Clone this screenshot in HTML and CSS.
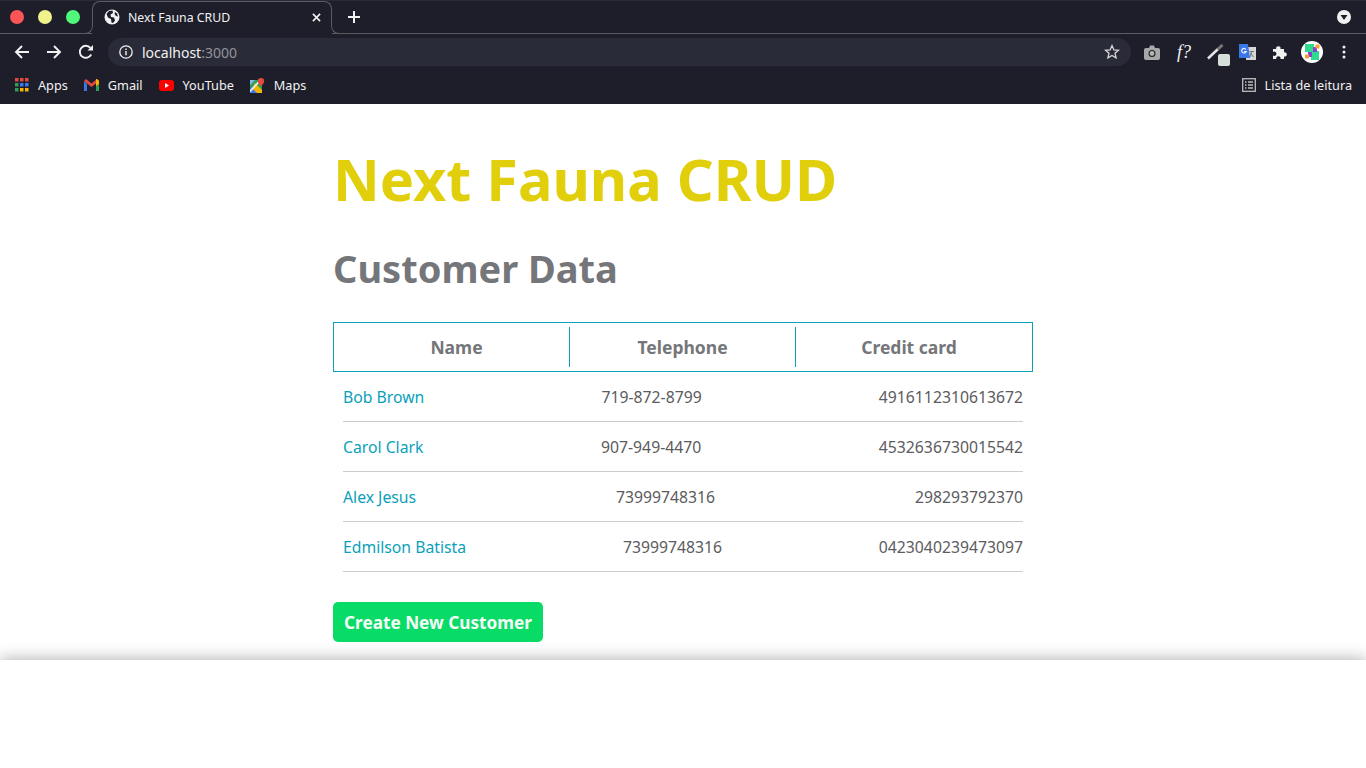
FILE: index.html
```html
<!DOCTYPE html>
<html lang="en">

<head>
    <meta charset="UTF-8">
    <title>Next Fauna CRUD</title>
    <link rel="stylesheet" href="styles.css">
</head>

<body>
    <div class="browser">
        <div class="tabstrip">
            <div class="lights">
                <span class="light red"></span>
                <span class="light yellow"></span>
                <span class="light green"></span>
            </div>
            <div class="tab">
                <span class="flare flare-left"></span>
                <span class="flare flare-right"></span>
                <svg class="ic-globe" width="16" height="16" viewBox="0 0 16 16">
                    <circle cx="8" cy="8" r="7.5" fill="#f1f1f1" />
                    <path d="M2.500 5l2.500-3 3.500-.5.5 2.500-2.500 1.500 .5 2.500 3 .5 1 3-2 2.500-1.500-.5-.5-3.500-3-1.500z" fill="#1d1e2a" />
                    <path d="M11 3l2 1.500 1 3-2-.5-1.500-2z" fill="#1d1e2a" />
                </svg>
                <span class="tab-title">Next Fauna CRUD</span>
                <svg class="ic-close" width="9" height="9" viewBox="0 0 10 10">
                    <path d="M1 1l8 8M9 1l-8 8" stroke="#f1f1f1" stroke-width="1.800" />
                </svg>
            </div>
            <svg class="ic-plus" width="12" height="12" viewBox="0 0 12 12">
                <path d="M6 0v12M0 6h12" stroke="#f1f1f1" stroke-width="2" />
            </svg>
            <div class="strip-end">
                <svg width="14" height="14" viewBox="0 0 14 14">
                    <circle cx="7" cy="7" r="7" fill="#f1f1f1" />
                    <path d="M3.500 5h7L7 10z" fill="#1d1e2a" />
                </svg>
            </div>
        </div>

        <div class="toolbar">
            <svg class="nav-ic" width="16" height="16" viewBox="0 0 16 16">
                <path d="M15 8H2M8 2L2 8l6 6" fill="none" stroke="#f1f1f1" stroke-width="1.900" />
            </svg>
            <svg class="nav-ic" width="16" height="16" viewBox="0 0 16 16">
                <path d="M1 8h13M8 2l6 6-6 6" fill="none" stroke="#f1f1f1" stroke-width="1.900" />
            </svg>
            <svg class="nav-ic" width="16" height="16" viewBox="0 0 16 16">
                <path d="M13.200 10.500A6 6 0 1 1 12.400 3.900" fill="none" stroke="#f1f1f1" stroke-width="1.900" />
                <path d="M9.500 6.500H15V1z" fill="#f1f1f1" />
            </svg>
            <div class="omnibox">
                <svg width="14" height="14" viewBox="0 0 14 14">
                    <circle cx="7" cy="7" r="6.200" fill="none" stroke="#f1f1f1" stroke-width="1.300" />
                    <path d="M7 6v4.200M7 3.600v1.400" stroke="#f1f1f1" stroke-width="1.400" />
                </svg>
                <span class="url">localhost<span class="port">:3000</span></span>
                <svg class="ic-star" width="16" height="16" viewBox="0 0 16 16">
                    <path d="M8 1.600l1.900 4.300 4.600.4-3.500 3 1.100 4.600L8 11.400l-4.100 2.500L5 9.300l-3.500-3 4.600-.4z" fill="none" stroke="#d8d8d8" stroke-width="1.300" />
                </svg>
            </div>
            <div class="extensions">
                <div class="ext-slot">
                    <svg width="16" height="15" viewBox="0 0 16 15">
                        <path d="M2 3h3l1-2.500h4L11 3h3a2 2 0 0 1 2 2v8a2 2 0 0 1-2 2H2a2 2 0 0 1-2-2V5a2 2 0 0 1 2-2z" fill="#a8a8a8" />
                        <circle cx="8" cy="8.500" r="3.500" fill="#1d1e2a" />
                        <circle cx="8" cy="8.500" r="2.400" fill="#b4b4b4" />
                    </svg>
                </div>
                <div class="ext-slot ext-font">f?</div>
                <div class="ext-slot ext-picker">
                    <svg width="18" height="16" viewBox="0 0 18 16">
                        <path d="M1 14.500L11 5" stroke="#e4e4e4" stroke-width="2.600" />
                        <path d="M10.500 5.500l5-4.500" stroke="#777" stroke-width="3" />
                    </svg>
                    <span class="picker-badge"></span>
                </div>
                <div class="ext-slot">
                    <svg width="18" height="17" viewBox="0 0 18 17">
                        <rect x="7" y="3" width="10" height="13" fill="#d6d6d6" />
                        <path d="M10.500 7.500h4.500M12.700 7l-1.500 6M11.500 9l3 4" stroke="#777" stroke-width="1" fill="none" />
                        <path d="M0 0h9l2 14H0z" fill="#3b78e7" />
                        <path d="M7 5.500A2.300 2.300 0 1 0 7.200 7.500H5.200" fill="none" stroke="#fff" stroke-width="1.100" />
                    </svg>
                </div>
                <div class="ext-slot">
                    <svg width="16" height="16" viewBox="0 0 16 16">
                        <path d="M1 5h3.200a2.200 2.200 0 1 1 4.300 0H12v3.300a2.200 2.200 0 1 1 0 4.200V15H8.500a2.200 2.200 0 1 0-4.200 0H1v-3.400a2.200 2.200 0 1 0 0-3.600z" fill="#f1f1f1" />
                    </svg>
                </div>
                <div class="ext-slot">
                    <svg width="22" height="22" viewBox="0 0 22 22">
                        <circle cx="11" cy="11" r="11" fill="#fff" />
                        <rect x="4" y="3" width="9" height="8" fill="#2fdc8e" />
                        <rect x="10" y="10" width="8" height="9" fill="#2fdc8e" />
                        <rect x="12" y="6" width="4" height="5" fill="#8e3fd6" />
                        <rect x="7" y="11" width="4" height="5" fill="#8e3fd6" />
                        <rect x="14.500" y="3.500" width="4" height="4" fill="#f2a13a" />
                        <rect x="4" y="13.500" width="4" height="4" fill="#f2a13a" />
                    </svg>
                </div>
                <div class="ext-slot">
                    <svg width="4" height="14" viewBox="0 0 4 14">
                        <circle cx="2" cy="2" r="1.500" fill="#f1f1f1" />
                        <circle cx="2" cy="7" r="1.500" fill="#f1f1f1" />
                        <circle cx="2" cy="12" r="1.500" fill="#f1f1f1" />
                    </svg>
                </div>
            </div>
        </div>

        <div class="bookmarks">
            <a class="bookmark">
                <svg width="14" height="14" viewBox="0 0 14 14">
                    <path d="M0 0h3.500v3.500H0zM5 0h3.500v3.500H5zM10 0h3.500v3.500H10z" fill="#e04a3f" />
                    <path d="M0 5h3.500v3.500H0z" fill="#2f9e57" />
                    <path d="M5 5h3.500v3.500H5zM10 5h3.500v3.500H10z" fill="#3b78e7" />
                    <path d="M0 10h3.500v3.500H0z" fill="#2f9e57" />
                    <path d="M5 10h3.500v3.500H5zM10 10h3.500v3.500H10z" fill="#f5b400" />
                </svg>
                Apps
            </a>
            <a class="bookmark">
                <svg width="15" height="12" viewBox="0 0 15 12">
                    <path d="M0 2v10h3V5z" fill="#3b78e7" />
                    <path d="M15 2v10h-3V5z" fill="#2f9e57" />
                    <path d="M0 2l2-2 5.500 4.500L13 0l2 2-7.500 6z" fill="#e04a3f" />
                    <path d="M12 0h1l2 2v3l-3 2z" fill="#f5b400" />
                </svg>
                Gmail
            </a>
            <a class="bookmark">
                <svg width="15" height="11" viewBox="0 0 15 11">
                    <rect width="15" height="11" rx="3" fill="#f00" />
                    <path d="M6 3l4 2.500L6 8z" fill="#fff" />
                </svg>
                YouTube
            </a>
            <a class="bookmark">
                <svg width="15" height="15" viewBox="0 0 15 15">
                    <rect y="2" width="12" height="13" fill="#2f9e57" />
                    <path d="M0 2h5L0 7z" fill="#8ab4f8" />
                    <path d="M0 15h12V12L5 5z" fill="#f5b400" />
                    <path d="M0 8.500V15h7z" fill="#3b78e7" />
                    <path d="M0 12L9.500 2H12L0 14.500z" fill="#f1f1f1" />
                    <path d="M11 0a3.200 3.200 0 0 1 3.200 3.200C14.200 5.500 11 8 11 8S7.800 5.500 7.800 3.200A3.200 3.200 0 0 1 11 0z" fill="#e04a3f" />
                </svg>
                Maps
            </a>
            <a class="bookmark reading">
                <svg width="14" height="14" viewBox="0 0 14 14">
                    <rect x=".7" y=".7" width="12.600" height="12.600" fill="none" stroke="#bdbdbd" stroke-width="1.300" />
                    <path d="M3 4h1.500M6 4h5M3 7h1.500M6 7h5M3 10h1.500M6 10h5" stroke="#bdbdbd" stroke-width="1.300" />
                </svg>
                Lista de leitura
            </a>
        </div>
    </div>

    <div class="viewport">
        <div class="container">
            <h1 class="title">Next Fauna CRUD</h1>
            <h2 class="subtitle">Customer Data</h2>

            <div class="table">
                <div class="table-head">
                    <div class="head-cell">Name</div>
                    <div class="head-cell">Telephone</div>
                    <div class="head-cell last">Credit card</div>
                </div>
                <div class="table-row">
                    <a class="customer">Bob Brown</a>
                    <span>719-872-8799</span>
                    <span>4916112310613672</span>
                </div>
                <div class="table-row">
                    <a class="customer">Carol Clark</a>
                    <span>907-949-4470</span>
                    <span>4532636730015542</span>
                </div>
                <div class="table-row">
                    <a class="customer">Alex Jesus</a>
                    <span>73999748316</span>
                    <span>298293792370</span>
                </div>
                <div class="table-row">
                    <a class="customer">Edmilson Batista</a>
                    <span>73999748316</span>
                    <span>0423040239473097</span>
                </div>
            </div>

            <button class="create-btn">Create New Customer</button>
        </div>
    </div>
    <div class="below"></div>
</body>

</html>
```
FILE: styles.css
```css
html,
body {
    margin: 0;
    height: 100%;
    overflow: hidden;
    background-color: white;
    font-family: 'Noto Sans', sans-serif;
}

/* Browser chrome */
.browser {
    background-color: #1d1e2a;
    color: #f1f1f1;
    height: 104px;
}

.tabstrip {
    height: 34px;
    display: flex;
    align-items: center;
    box-sizing: border-box;
    border-bottom: 1px solid #5a5b63;
    border-top: 1px solid #2a2b36;
}

.lights {
    display: flex;
    gap: 14px;
    padding-left: 10px;
    width: 92px;
    box-sizing: border-box;
}

.light {
    width: 14px;
    height: 14px;
    border-radius: 50%;
}

.red {
    background-color: #fb5555;
}

.yellow {
    background-color: #f0f28a;
}

.green {
    background-color: #50f77a;
}

.tab {
    position: relative;
    width: 240px;
    height: 33px;
    margin-bottom: -1px;
    box-sizing: border-box;
    display: flex;
    align-items: center;
    padding: 0 11px 1px 12px;
    background-color: #1d1e2a;
}

/* outline of the tab, stops where the flares begin */
.tab::before {
    content: "";
    position: absolute;
    top: 0;
    left: 0;
    right: 0;
    bottom: 8px;
    border: 1px solid #5a5b63;
    border-bottom: none;
    border-radius: 8px 8px 0 0;
}

.flare {
    position: absolute;
    bottom: 0;
    width: 9px;
    height: 9px;
    box-sizing: border-box;
    border-bottom: 1px solid #5a5b63;
    background-color: #1d1e2a;
}

.flare-left {
    left: -8px;
    border-right: 1px solid #5a5b63;
    border-bottom-right-radius: 8px;
}

.flare-right {
    right: -8px;
    border-left: 1px solid #5a5b63;
    border-bottom-left-radius: 8px;
}

.tab-title {
    margin-left: 8px;
    font-size: 12.300px;
    flex: 1;
}

.ic-plus {
    margin-left: 16px;
}

.strip-end {
    margin-left: auto;
    padding-right: 15px;
    display: flex;
}

.toolbar {
    height: 34px;
    box-sizing: border-box;
    padding: 2px 0 0 14px;
    display: flex;
    align-items: center;
}

.nav-ic {
    margin-right: 16px;
}

.omnibox {
    width: 1023px;
    height: 28px;
    margin-left: -2px;
    box-sizing: border-box;
    padding: 0 11px;
    display: flex;
    align-items: center;
    background-color: #2a2b38;
    border-radius: 14px;
}

.url {
    margin-left: 9px;
    font-size: 14px;
    flex: 1;
}

.port {
    color: #92939a;
}

.extensions {
    display: flex;
    align-items: center;
    padding-left: 5px;
}

.ext-slot {
    position: relative;
    width: 32px;
    height: 28px;
    display: flex;
    align-items: center;
    justify-content: center;
}

.ext-font {
    font-family: 'Liberation Serif', serif;
    font-style: italic;
    font-size: 18px;
}

.picker-badge {
    position: absolute;
    right: 2px;
    bottom: 0;
    width: 12px;
    height: 12px;
    border-radius: 2px;
    background-color: #d6dedb;
}

.bookmarks {
    height: 36px;
    box-sizing: border-box;
    padding: 0 14px 2px 15px;
    display: flex;
    align-items: center;
    font-size: 12.700px;
}

.bookmark {
    display: flex;
    align-items: center;
    gap: 9px;
    margin-right: 16px;
}

.reading {
    margin-left: auto;
    margin-right: 0;
}

/* Page */
.viewport {
    height: 556px;
    overflow: hidden;
}

.container {
    width: 700px;
    margin: 0 auto;
}

.title {
    margin: 0;
    padding-top: 36px;
    font-size: 57.600px;
    line-height: 78px;
    font-weight: 700;
    color: #e2cf0b;
}

.subtitle {
    margin: 25px 0 0;
    font-size: 38px;
    line-height: 50px;
    font-weight: 700;
    color: #75767a;
}

.table {
    margin-top: 29px;
}

.table-head {
    display: flex;
    height: 50px;
    box-sizing: border-box;
    padding: 4px 10px;
    border: 1px solid #0a9fba;
}

.head-cell {
    flex: 0 0 226px;
    box-sizing: border-box;
    display: flex;
    align-items: center;
    justify-content: center;
    font-size: 17.500px;
    font-weight: 700;
    color: #75767a;
    border-right: 1px solid #0a9fba;
}

.head-cell.last {
    border-right: none;
}

.table-row {
    display: flex;
    justify-content: space-between;
    align-items: center;
    height: 50px;
    box-sizing: border-box;
    margin: 0 10px;
    font-size: 15.750px;
    color: #5c5c60;
    border-bottom: 1px solid #cccccc;
}

.customer {
    color: #0a9fba;
}

.create-btn {
    display: block;
    margin-top: 30px;
    width: 210px;
    height: 40px;
    padding: 0;
    border: none;
    border-radius: 5px;
    background-color: #08dc66;
    color: #f6fcf8;
    font-family: 'Noto Sans', sans-serif;
    font-size: 17.200px;
    font-weight: 700;
}

.below {
    position: relative;
    height: 108px;
    background-color: white;
    box-shadow: 0 0 16px rgba(0, 0, 0, 0.35);
}
```
